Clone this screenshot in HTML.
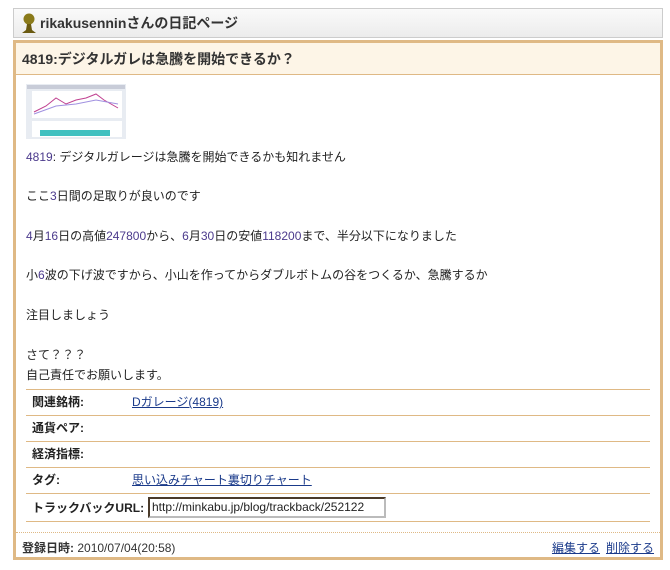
<!DOCTYPE html>
<html><head><meta charset="utf-8"><style>
*{margin:0;padding:0;box-sizing:border-box}
body{width:670px;height:570px;background:#fff;font-family:"Liberation Sans","Noto Sans CJK JP",sans-serif;font-size:12px;color:#222;position:relative;overflow:hidden}
.hd{position:absolute;left:13px;top:8px;width:650px;height:30px;border:1px solid #ccc;background:linear-gradient(#fafafa,#ececec);font-size:14px;font-weight:bold;color:#333;line-height:28px;padding-left:26px}
.icon{position:absolute;left:7px;top:4px}
.box{position:absolute;left:13px;top:40px;width:650px;height:520px;border:3px solid #dfb985}
.tt{height:32px;background:#fdf5e7;border-bottom:1px solid #dfb985;font-size:14px;font-weight:bold;color:#333;line-height:32px;padding-left:6px}
.t{position:absolute;left:10px;white-space:nowrap}
.n{color:#4b3a8c}
.row{position:absolute;left:10px;width:624px;border-top:1px solid #dfb985;height:26px;line-height:25px;font-weight:bold;padding-left:6px}
.row a{position:absolute;left:106px;font-weight:normal;color:#1a3a8a;text-decoration:underline}
.tb{position:absolute;left:122px;top:3px;width:238px;height:21px;border:2px solid #4a3a2a;border-right-color:#bbb;border-bottom-color:#bbb;font-weight:normal;line-height:17px;padding-left:2px;font-size:12px;color:#222}
.dot{position:absolute;left:0;top:489px;width:644px;border-top:1px dotted #dfb985}
.ft{position:absolute;left:6px;top:496px;font-weight:bold;color:#333}
.ft span{font-weight:normal}
.lk{position:absolute;right:6px;top:496px;color:#1a3a8a}
.lk a{color:#1a3a8a;text-decoration:underline;margin-left:6px}
</style></head><body>
<div class="hd"><svg class="icon" width="16" height="21" viewBox="0 0 16 21"><circle cx="8" cy="6" r="5.5" fill="#8a7a1a"/><path d="M6 11 L10 11 L11 17 L15 20 L1 20 L5 17Z" fill="#6a5a10"/></svg>rikakusenninさんの日記ページ</div>
<div class="box">
<div class="tt">4819:デジタルガレは急騰を開始できるか？</div>
<svg style="position:absolute;left:10px;top:41px" width="100" height="55" viewBox="0 0 100 55"><rect width="100" height="55" fill="#e8ecf2"/><rect x="1" y="1" width="98" height="4" fill="#c8ccd8"/><rect x="6" y="7" width="90" height="27" fill="#fff"/><polyline points="8,28 20,22 30,14 40,20 50,16 60,14 70,10 78,16 85,20 92,24" fill="none" stroke="#c04090" stroke-width="1"/><polyline points="8,30 30,22 50,20 70,16 92,20" fill="none" stroke="#a090e0" stroke-width="1"/><rect x="6" y="37" width="90" height="16" fill="#fff"/><rect x="14" y="46" width="70" height="6" fill="#40c0c0"/></svg>
<div class="t" style="top:105px"><span class="n">4819</span>: デジタルガレージは急騰を開始できるかも知れません</div>
<div class="t" style="top:144px">ここ<span class="n">3</span>日間の足取りが良いのです</div>
<div class="t" style="top:184px"><span class="n">4</span>月<span class="n">16</span>日の高値<span class="n">247800</span>から、<span class="n">6</span>月<span class="n">30</span>日の安値<span class="n">118200</span>まで、半分以下になりました</div>
<div class="t" style="top:223px">小<span class="n">6</span>波の下げ波ですから、小山を作ってからダブルボトムの谷をつくるか、急騰するか</div>
<div class="t" style="top:263px">注目しましょう</div>
<div class="t" style="top:303px">さて？？？</div>
<div class="t" style="top:323px">自己責任でお願いします。</div>
<div class="row" style="top:346px">関連銘柄:<a>Dガレージ(4819)</a></div>
<div class="row" style="top:372px">通貨ペア:</div>
<div class="row" style="top:398px">経済指標:</div>
<div class="row" style="top:424px">タグ:<a>思い込みチャート裏切りチャート</a></div>
<div class="row" style="top:450px;height:29px;line-height:28px;border-bottom:1px solid #dfb985">トラックバックURL:<div class="tb">http://minkabu.jp/blog/trackback/252122</div></div>
<div class="dot"></div>
<div class="ft">登録日時: <span>2010/07/04(20:58)</span></div>
<div class="lk"><a>編集する</a><a>削除する</a></div>
</div>
</body></html>
